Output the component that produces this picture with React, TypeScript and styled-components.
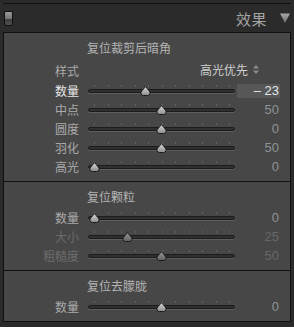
import styled, { createGlobalStyle } from 'styled-components';

const GlobalStyle = createGlobalStyle`
  html, body {
    margin: 0;
    padding: 0;
    background: #2b2b2b;
  }
  * {
    box-sizing: border-box;
  }
`;

type SliderProps = {
  label: string;
  value: number;
  min: number;
  max: number;
  active?: boolean;
  dim?: boolean;
};

const TICKS = Array.from({ length: 11 });

const Thumb = ({ dim }: { dim?: boolean }) => (
  <svg width="11" height="10" viewBox="0 0 11 10">
    <defs>
      <linearGradient id={dim ? 'thumbDim' : 'thumb'} x1="0" y1="0" x2="0" y2="1">
        <stop offset="0" stopColor={dim ? '#9a9a9a' : '#dcdcdc'} />
        <stop offset="1" stopColor={dim ? '#606060' : '#8a8a8a'} />
      </linearGradient>
    </defs>
    <path
      d="M5.5 0.6 L9.3 5 Q10.4 6.4 10 7.9 Q9.4 9.5 7.6 9.5 L3.4 9.5 Q1.6 9.5 1 7.9 Q0.6 6.4 1.7 5 Z"
      fill={`url(#${dim ? 'thumbDim' : 'thumb'})`}
      stroke="#1b1b1b"
      strokeWidth="1"
    />
  </svg>
);

const SliderRow = ({ label, value, min, max, active, dim }: SliderProps) => {
  const pos = 6 + ((value - min) / (max - min)) * 135;
  const shown = value < 0 ? `– ${Math.abs(value)}` : `${value}`;
  return (
    <Row>
      <Label $active={active} $dim={dim}>{label}</Label>
      <Slider>
        <Ticks>
          {TICKS.map((_, i) => (
            <Tick key={i} />
          ))}
        </Ticks>
        <Track />
        <ThumbWrap style={{ left: pos - 5.5 }}>
          <Thumb dim={dim} />
        </ThumbWrap>
      </Slider>
      <Value $active={active} $dim={dim}>{shown}</Value>
    </Row>
  );
};

const App = () => {
  return (
    <Page>
      <GlobalStyle />
      <TopEdge />
      <Header>
        <Switch />
        <HeaderRight>
          <HeaderTitle>效果</HeaderTitle>
          <svg width="10" height="10" viewBox="0 0 10 10">
            <defs>
              <linearGradient id="tri" x1="0" y1="0" x2="0" y2="1">
                <stop offset="0" stopColor="#a8a8a8" />
                <stop offset="1" stopColor="#6c6c6c" />
              </linearGradient>
            </defs>
            <polygon points="0,0.5 10,0.5 5,10" fill="url(#tri)" />
          </svg>
        </HeaderRight>
      </Header>

      <Panel>
        <Section>
          <Title>复位裁剪后暗角</Title>
          <SelectRow>
            <Label>样式</Label>
            <Select>
              高光优先
              <svg width="6" height="9" viewBox="0 0 6 9">
                <polygon points="3,0 6,3.5 0,3.5" fill="#8c8c8c" />
                <polygon points="0,5.5 6,5.5 3,9" fill="#8c8c8c" />
              </svg>
            </Select>
          </SelectRow>
          <SliderRow label="数量" value={-23} min={-100} max={100} active />
          <SliderRow label="中点" value={50} min={0} max={100} />
          <SliderRow label="圆度" value={0} min={-100} max={100} />
          <SliderRow label="羽化" value={50} min={0} max={100} />
          <SliderRow label="高光" value={0} min={0} max={100} />
        </Section>

        <Section $divided>
          <Title>复位颗粒</Title>
          <SliderRow label="数量" value={0} min={0} max={100} />
          <SliderRow label="大小" value={25} min={0} max={100} dim />
          <SliderRow label="粗糙度" value={50} min={0} max={100} dim />
        </Section>

        <Section $divided>
          <Title>复位去朦胧</Title>
          <SliderRow label="数量" value={0} min={-100} max={100} />
        </Section>
      </Panel>
    </Page>
  );
};

const Page = styled.div`
  width: 294px;
  height: 327px;
  background: #2b2b2b;
  font-family: 'Noto Sans CJK SC', 'Noto Sans', sans-serif;
  overflow: hidden;
`;

const TopEdge = styled.div`
  height: 4px;
  margin: 0 3px;
  border-bottom: 1px solid #111;
`;

const Header = styled.div`
  height: 28px;
  display: flex;
  align-items: center;
  justify-content: space-between;
  padding: 0 4px 0 4px;
`;

const Switch = styled.div`
  width: 9px;
  height: 15px;
  margin-top: 1px;
  border: 1px solid #111;
  border-radius: 2px;
  background: linear-gradient(#9c9c9c 0%, #767676 50%, #3e3e3e 54%, #4e4e4e 100%);
`;

const HeaderRight = styled.div`
  display: flex;
  align-items: center;
  gap: 13px;
`;

const HeaderTitle = styled.span`
  font-size: 15px;
  color: #a4a4a4;
  letter-spacing: 0.5px;
`;

const Panel = styled.div`
  margin: 0 3px;
  height: 290px;
  background: #474747;
  border: 1px solid #111;
`;

const Section = styled.div<{ $divided?: boolean }>`
  padding: 6px 0 5px 0;
  border-top: ${(p) => (p.$divided ? '1px solid #111' : 'none')};
`;

const Title = styled.div`
  height: 18px;
  line-height: 18px;
  margin-bottom: 2px;
  padding-left: 83px;
  font-size: 12px;
  color: #b4b4b4;
`;

const Row = styled.div`
  display: flex;
  align-items: center;
  height: 19px;
`;

const SelectRow = styled(Row)`
  height: 22px;
`;

const Label = styled.div<{ $active?: boolean; $dim?: boolean }>`
  width: 75px;
  margin-right: 9px;
  text-align: right;
  font-size: 12px;
  line-height: 19px;
  color: ${(p) => (p.$active ? '#e8e8e8' : p.$dim ? '#6c6c6c' : '#aaaaaa')};
`;

const Select = styled.div`
  width: 171px;
  display: flex;
  align-items: center;
  justify-content: flex-end;
  gap: 5px;
  font-size: 12px;
  color: #cfcfcf;
  padding-bottom: 2px;
`;

const Slider = styled.div`
  position: relative;
  width: 147px;
  height: 19px;
`;

const Ticks = styled.div`
  position: absolute;
  top: 4px;
  left: 6px;
  width: 136px;
  height: 2px;
  display: flex;
  justify-content: space-between;
`;

const Tick = styled.span`
  width: 1px;
  height: 2px;
  background: #626262;
`;

const Track = styled.div`
  position: absolute;
  top: 8px;
  left: 0;
  width: 147px;
  height: 4px;
  border-radius: 2px;
  background: #303030;
  border: 1px solid #1c1c1c;
  box-shadow: 0 1px 0 #5e5e5e;
`;

const ThumbWrap = styled.div`
  position: absolute;
  top: 5px;
  width: 11px;
  height: 10px;
  display: flex;
`;

const Value = styled.div<{ $active?: boolean; $dim?: boolean }>`
  width: 43px;
  height: 14px;
  margin-left: 2px;
  padding-right: 1px;
  text-align: right;
  font-family: 'Liberation Sans', 'DejaVu Sans', sans-serif;
  font-size: 13px;
  line-height: 14px;
  background: ${(p) => (p.$active ? '#575757' : 'transparent')};
  color: ${(p) => (p.$active ? '#e2e8ee' : p.$dim ? '#676767' : '#8e9398')};
`;

export default App;
